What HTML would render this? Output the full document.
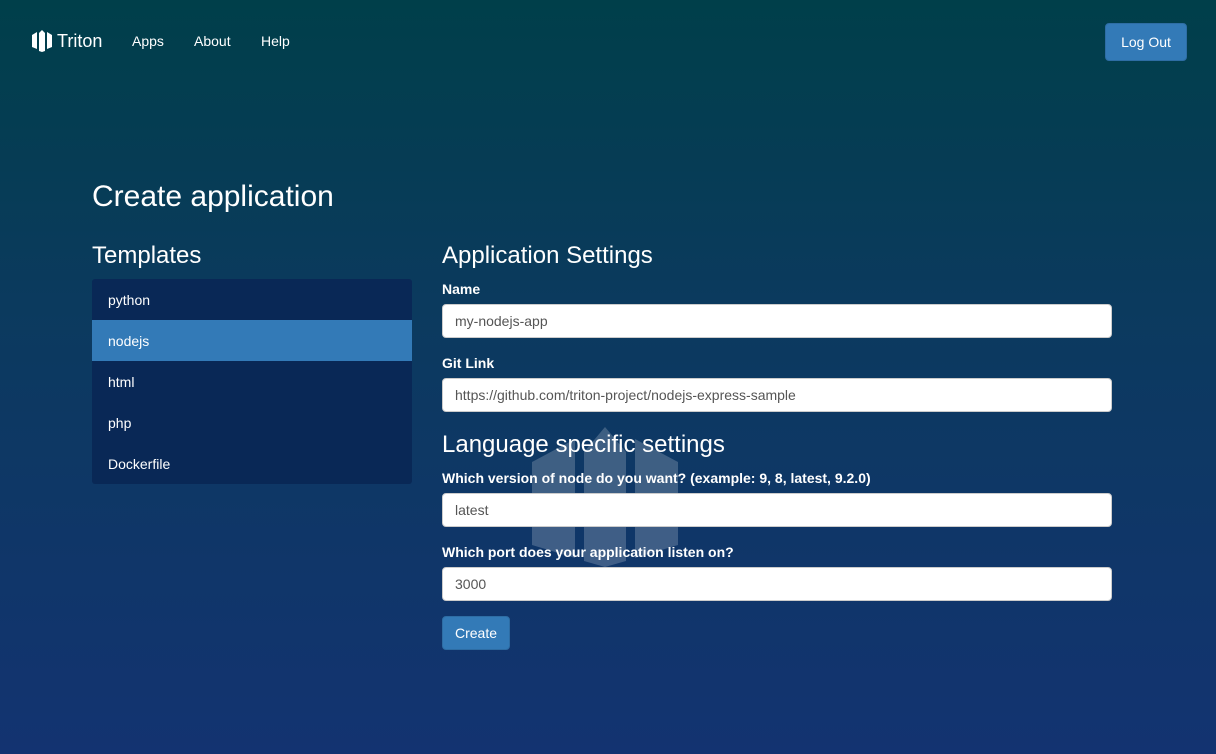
<!DOCTYPE html>
<html><head><meta charset="utf-8"><style>
*{box-sizing:border-box;margin:0;padding:0}
body{width:1216px;height:754px;overflow:hidden;font-family:"Liberation Sans",Arial,sans-serif;color:#fff;background:linear-gradient(180deg,#003f4a 0%,#0b3a5e 40%,#133371 100%);position:relative}
.nav{position:absolute;top:0;left:0;right:0;height:82px}
.brand{position:absolute;left:32px;top:30px;font-size:18px;display:flex;align-items:center;gap:5px}
.nav a{position:absolute;top:33px;font-size:14px;color:#fff}
.logout{position:absolute;left:1105px;top:23px;width:82px;height:38px;background:#337ab7;border:1px solid #2e6da4;border-radius:4px;font-size:14px;text-align:center;line-height:36px}
h1{position:absolute;left:92px;top:180px;font-size:30px;font-weight:400}
h3{position:absolute;font-size:24px;font-weight:400}
.list{position:absolute;left:92px;top:279px;width:320px;background:#092856;border-radius:3px;overflow:hidden}
.list div{height:41px;line-height:43px;padding-left:16px;font-size:14px}
.list .act{background:#337ab7}
label{position:absolute;left:442px;font-size:14px;font-weight:700}
.in{position:absolute;left:442px;width:670px;height:34px;background:#fff;border:1px solid #ccc;border-radius:4px;color:#555;font-size:14px;line-height:32px;padding-left:12px}
.btn{position:absolute;left:442px;top:616px;width:68px;height:34px;background:#337ab7;border:1px solid #2e6da4;border-radius:4px;font-size:14px;text-align:center;line-height:32px}
</style></head><body>
<svg style="position:absolute;left:532px;top:427px" width="146" height="140" viewBox="0 0 146 140"><g fill="rgba(255,255,255,0.2)"><polygon points="0,35 43,12 43,131 0,118"/><polygon points="52,25 73,0 94,25 94,134 73,140 52,134"/><polygon points="146,35 103,12 103,131 146,118"/></g></svg>
<div class="nav">
<div class="brand"><svg width="20" height="22" viewBox="0 0 20 22"><g fill="#fff"><polygon points="0,5 5,2 5,19 0,17"/><polygon points="7,3 10,0 13,3 13,21 10,22 7,21"/><polygon points="20,5 15,2 15,19 20,17"/></g></svg>Triton</div>
<a style="left:132px">Apps</a><a style="left:194px">About</a><a style="left:261px">Help</a>
<div class="logout">Log Out</div>
</div>
<h1>Create application</h1>
<h3 style="left:92px;top:242px">Templates</h3>
<div class="list"><div>python</div><div class="act">nodejs</div><div>html</div><div>php</div><div>Dockerfile</div></div>
<h3 style="left:442px;top:242px">Application Settings</h3>
<label style="top:281px">Name</label>
<div class="in" style="top:304px">my-nodejs-app</div>
<label style="top:355px">Git Link</label>
<div class="in" style="top:378px">https://github.com/triton-project/nodejs-express-sample</div>
<h3 style="left:442px;top:431px">Language specific settings</h3>
<label style="top:470px">Which version of node do you want? (example: 9, 8, latest, 9.2.0)</label>
<div class="in" style="top:493px">latest</div>
<label style="top:544px">Which port does your application listen on?</label>
<div class="in" style="top:567px">3000</div>
<div class="btn">Create</div>
</body></html>
